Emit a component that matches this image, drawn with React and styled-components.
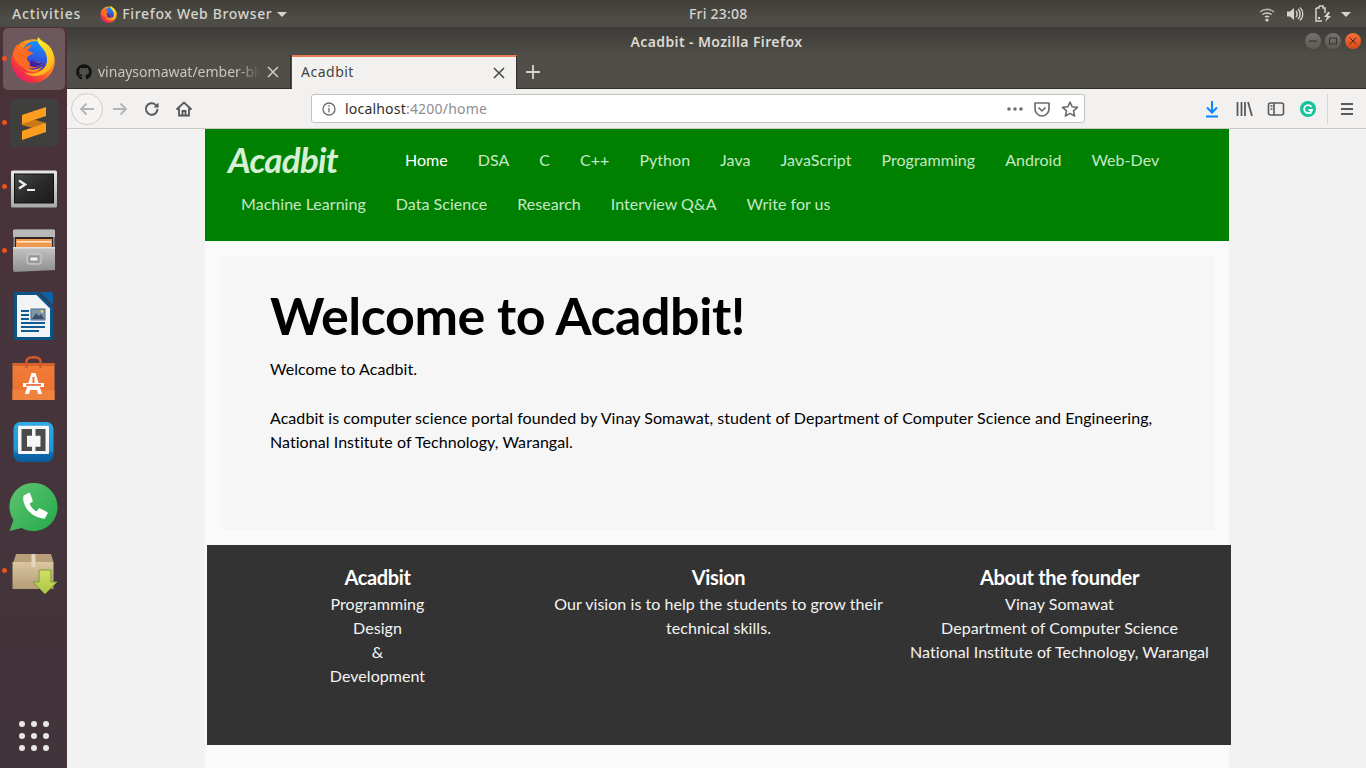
import React from "react";
import styled, { createGlobalStyle } from "styled-components";
import { FaGithub } from "react-icons/fa";

const Global = createGlobalStyle`
  html, body { margin: 0; padding: 0; height: 100%; overflow: hidden; background: #f2f2f2; }
  * { box-sizing: border-box; }
  #root { width: 1366px; height: 768px; }
`;

const UI_FONT = `"Noto Sans", "Open Sans", sans-serif`;
const PAGE_FONT = `Lato, "Open Sans", sans-serif`;

const Desktop = styled.div`
  width: 1366px; height: 768px; overflow: hidden;
  display: flex; flex-direction: column;
  background: #f2f2f2; font-family: ${UI_FONT};
`;
const TopBar = styled.header`
  height: 27px; flex: none; display: flex; align-items: center;
  background: linear-gradient(#3f3d38, #4f4d47 70%, #4d4b45);
  color: #d6d4ce; font-size: 14px; font-weight: 500; letter-spacing: .65px;
`;
const TopLeft = styled.div`
  width: 689px; padding-left: 12px; display: flex; align-items: center;
`;
const Activities = styled.span`letter-spacing: .9px;`;
const AppMenu = styled.div`
  margin-left: 19px; display: flex; align-items: center; gap: 4px;
`;
const Caret = styled.span`
  width: 0; height: 0; margin-left: ${p => p.$ml}px; margin-top: 1px;
  border-left: 5px solid transparent; border-right: 5px solid transparent;
  border-top: 5px solid #d6d4ce;
`;
const Clock = styled.div`letter-spacing: .2px;`;
const TopRight = styled.div`
  margin-left: auto; padding-right: 15px; display: flex; align-items: center; gap: 8px;
`;
const Main = styled.div`flex: 1; min-height: 0; display: flex;`;

const Dock = styled.nav`
  width: 67px; flex: none; display: flex; flex-direction: column;
  background: linear-gradient(#4b3138, #47343c 45%, #41343a);
`;
const DockSlot = styled.div`
  position: relative; height: 64px; flex: none;
  display: flex; align-items: center; justify-content: center;
  &::before {
    content: "";
    display: ${p => (p.$running ? "block" : "none")};
    position: absolute; left: 2px; top: 29px; width: 5px; height: 5px;
    border-radius: 50%; background: #e95420;
  }
`;
const ActiveTile = styled.div`
  width: 62px; height: 62px; border-radius: 5px; background: #6d585b;
  display: flex; align-items: center; justify-content: center;
`;
const Grid9 = styled.div`
  margin-top: auto; margin-bottom: 17px; align-self: center;
  display: grid; grid-template-columns: repeat(3, 6px); grid-auto-rows: 6px; gap: 6px;
`;
const Dot = styled.i`display: block; border-radius: 50%; background: #e9e7e6;`;

const Win = styled.div`flex: 1; min-width: 0; display: flex; flex-direction: column;`;
const TitleBar = styled.div`
  height: 28px; flex: none; display: grid; grid-template-columns: 1fr auto 1fr; align-items: center;
  background: linear-gradient(#3c3b37, #4f4d47);
  color: #dcdad3; font-size: 14px; font-weight: 600; letter-spacing: .38px;
`;
const WinTitle = styled.span`grid-column: 2;`;
const WinButtons = styled.div`
  grid-column: 3; justify-self: end; padding-right: 5px; display: flex; gap: 4px;
`;
const WinButton = styled.div`
  width: 16px; height: 16px; border-radius: 50%;
  background: ${p => (p.$close ? "linear-gradient(#f0703a,#d9481a)" : "linear-gradient(#74726c,#5c5a54)")};
  display: flex; align-items: center; justify-content: center;
`;
const TabStrip = styled.div`
  height: 34px; flex: none; display: flex; align-items: stretch;
  background: #504e48; border-bottom: 1px solid #2f2e2b;
`;
const Tab = styled.div`
  position: relative; display: flex; align-items: center;
  width: ${p => (p.$active ? 225 : 224)}px;
  padding-left: 9px;
  padding-bottom: ${p => (p.$active ? 4 : 0)}px;
  margin-right: ${p => (p.$active ? 0 : 1)}px;
  font-size: 14px; letter-spacing: ${p => (p.$active ? ".5px" : "0")};
  color: ${p => (p.$active ? "#45443f" : "#c9c7c1")};
  background: ${p => (p.$active ? "#f2f1f0" : "transparent")};
  border-top: ${p => (p.$active ? "2px solid #ea7b55" : "none")};
  border-right: 1px solid #2f2e2b;
  margin-bottom: ${p => (p.$active ? "-1px" : "0")};
`;
const TabText = styled.span`
  width: ${p => p.$w}px; margin-left: ${p => p.$ml || 0}px; white-space: nowrap; overflow: hidden;
  ${p => p.$fade && "mask-image: linear-gradient(90deg,#000 85%,transparent);"}
`;
const TabClose = styled.span`
  position: absolute; right: 11px; top: 50%; margin-top: -6px; width: 12px; height: 12px; display: flex;
`;
const NewTab = styled.div`width: 32px; display: flex; align-items: center; justify-content: center;`;

const Toolbar = styled.div`
  height: 40px; flex: none; display: flex; align-items: center;
  background: #f2f1f0; border-bottom: 1px solid #c9c8c6;
`;
const BackButton = styled.div`
  width: 32px; height: 32px; margin-left: 4px; border-radius: 50%;
  border: 1px solid #cfcecc; background: #f5f4f3;
  display: flex; align-items: center; justify-content: center;
`;
const ToolSlot = styled.div`
  width: 24px; height: 24px; flex: none; display: flex; align-items: center; justify-content: center;
  margin-left: ${p => p.$ml ?? 8}px;
`;
const UrlBar = styled.div`
  width: 774px; height: 29px; margin-left: 115px; flex: none; display: flex; align-items: center;
  background: #fff; border: 1px solid #c4c3c1; border-radius: 3px; padding: 0 5px 0 10px;
  font-size: 14px; letter-spacing: .2px; color: #8e8e8e;
`;
const UrlHost = styled.span`color: #2e2e2e;`;
const UrlText = styled.div`margin-left: 7px; flex: 1;`;
const UrlIcons = styled.div`display: flex; align-items: center; gap: 9px;`;
const Divider = styled.div`width: 1px; height: 30px; margin-left: 7px; background: #d6d5d3;`;

const Viewport = styled.div`flex: 1; min-height: 0; overflow: hidden; background: #f2f2f2;`;
const Container = styled.div`
  width: 1024px; height: 100%; margin-left: 138px; background: #fafafa; font-family: ${PAGE_FONT};
`;
const SiteNav = styled.div`
  height: 112px; background: #008000; padding: 9px 0 0 21px;
`;
const Brand = styled.a`
  float: left; width: 164px; height: 44px; padding-left: 2px;
  font-size: 35px; line-height: 42px; font-style: italic; font-weight: 700; color: #d5f0d5;
  letter-spacing: -.75px;
`;
const NavItem = styled.a`
  display: inline-block; padding: 0 15px; height: 44px; line-height: 44px;
  font-size: 16px; letter-spacing: .03px; color: ${p => (p.$active ? "#fff" : "#c6e8c6")};
`;
const Jumbo = styled.section`
  height: 274px; margin: 15px 14px 15px 15px; background: #f6f6f6; padding: 27px 50px 0;
  color: #000;
`;
const Title = styled.h1`
  margin: 0; font-size: 52px; line-height: 64px; font-weight: 700; letter-spacing: -.45px;
`;
const Para = styled.p`
  margin: 0; font-size: 16px; line-height: 24px; min-height: 24px; letter-spacing: .055px;
`;
const Spacer = styled.div`height: 25px;`;
const Intro = styled.div`margin-top: 10px;`;
const Footer = styled.footer`
  width: 1024px; height: 200px; margin-left: 2px; background: #333; color: #f4f4f4;
  display: grid; grid-template-columns: repeat(3, 1fr); padding: 20px 1px 0 0; text-align: center;
`;
const FootCol = styled.div`padding: 0 5px;`;
const FootHead = styled.h4`
  margin: 0 0 3px; font-size: 20px; line-height: 24px; font-weight: 700; color: #fff; letter-spacing: -.35px;
`;
const FootLine = styled.div`font-size: 16px; line-height: 24px; letter-spacing: .05px;`;

/* ---------- drawings ---------- */
const Firefox = ({ size = 48, id = "a" }) => (
  <svg width={size} height={size} viewBox="0 0 48 48">
    <defs>
      <linearGradient id={id + "o"} x1="1" y1="0" x2="0.15" y2="1">
        <stop offset="0" stopColor="#ffd52e" />
        <stop offset=".45" stopColor="#ff8a1c" />
        <stop offset=".8" stopColor="#f5313e" />
        <stop offset="1" stopColor="#e3168a" />
      </linearGradient>
      <linearGradient id={id + "b"} x1=".6" y1="0" x2=".4" y2="1">
        <stop offset="0" stopColor="#1296ff" />
        <stop offset=".6" stopColor="#2f57e0" />
        <stop offset="1" stopColor="#43209a" />
      </linearGradient>
      <linearGradient id={id + "y"} x1=".3" y1="0" x2=".7" y2="1">
        <stop offset="0" stopColor="#fff22e" />
        <stop offset="1" stopColor="#ffb01e" />
      </linearGradient>
    </defs>
    <circle cx="23" cy="26" r="21.8" fill={`url(#${id}o)`} />
    <circle cx="26" cy="21" r="15" fill={`url(#${id}b)`} />
    <path d="M28 2 C26 7 30 10 34 15 C38 21 38 29 34 33 C29 39 21 40 14 37 C21 43 33 42 39 35 C45 28 45 18 39 11 C36 8 31 6 28 2Z" fill={`url(#${id}y)`} />
    <path d="M7 9 C7 13 8 15 11 16 C14 12 18 10 22 10 C20 13 19 14 17 15 C20 17 22 17 24 19 C21 19 17 21 17 24 C18 28 22 29 25 28 C28 27 30 27 32 29 C28 33 21 35 15 33 C9 31 5 26 3 20 C3 16 5 12 7 9Z" fill="#ff6a22" />
    <path d="M22 25 C24 28 29 28 32 28 C30 32 24 33 20 31 C19 29 20 27 22 25Z" fill="#4320a0" />
    <path d="M13 31 C18 36 26 36 33 31 C29 38 18 39 13 31Z" fill="#ff9a1f" />
  </svg>
);

const Sublime = () => (
  <svg width="48" height="48" viewBox="0 0 48 48">
    <rect width="48" height="48" rx="4" fill="#3f3f3e" />
    <path d="M12 17 L36 24 L36 33 L12 26Z" fill="#c9781a" />
    <path d="M12 16 L36 8 L36 17 L12 25Z" fill="#ff9e1e" />
    <path d="M12 32 L36 24 L36 33 L12 41Z" fill="#ff9e1e" />
  </svg>
);

const Terminal = () => (
  <svg width="48" height="56" viewBox="0 0 48 56">
    <defs>
      <linearGradient id="tf" x1="0" y1="0" x2="0" y2="1">
        <stop offset="0" stopColor="#e8e8e8" /><stop offset="1" stopColor="#a9a9a9" />
      </linearGradient>
      <linearGradient id="ts" x1="0" y1="0" x2="1" y2="1">
        <stop offset="0" stopColor="#45484a" /><stop offset=".5" stopColor="#2a2a2a" /><stop offset="1" stopColor="#1c1c1c" />
      </linearGradient>
    </defs>
    <rect x="1" y="11.5" width="46" height="37" rx="1.5" fill="url(#tf)" />
    <rect x="4" y="14.5" width="40" height="30" fill="#111" />
    <rect x="5" y="15.5" width="38" height="28" fill="url(#ts)" />
    <path d="M9 21.5 L15 25.5 L9 29.5" fill="none" stroke="#eee" strokeWidth="2.4" />
    <rect x="17" y="30" width="8" height="2" fill="#eee" />
  </svg>
);

const Files = () => (
  <svg width="48" height="56" viewBox="0 0 48 56">
    <defs>
      <linearGradient id="fb" x1="0" y1="0" x2="0" y2="1">
        <stop offset="0" stopColor="#c4c4c4" /><stop offset="1" stopColor="#8f8f8f" />
      </linearGradient>
    </defs>
    <path d="M3.500 7 C3.500 6 4.500 6 5.500 6 L43.500 6 C44.500 6 44.500 7 44.500 8 L44.500 47 L3.500 47Z" fill="#8b8b8b" />
    <rect x="3" y="7" width="42" height="7" fill="#b9b9b9" />
    <rect x="5" y="14" width="38" height="10" fill="#2b2622" />
    <rect x="6" y="16" width="36" height="9" fill="#ef9a4f" />
    <rect x="7" y="18" width="34" height="1.5" fill="#fbe7c9" />
    <path d="M3 24 L45 24 L45 47 L4 49 L3 47Z" fill="url(#fb)" />
    <rect x="3" y="24" width="42" height="1.5" fill="#e2e2e2" />
    <rect x="17" y="31" width="14" height="10" rx="2" fill="#a4a4a4" stroke="#d4d4d4" />
    <rect x="20" y="34" width="8" height="4" fill="#f0f0f0" stroke="#555" strokeWidth=".5" />
  </svg>
);

const Writer = () => (
  <svg width="48" height="56" viewBox="0 0 48 56">
    <path d="M4 5 L28 5 L43 20 L43 51 C43 52 42 53 41 53 L6 53 C5 53 4 52 4 51Z" fill="#0b5487" />
    <path d="M7 8 L26.500 8 L40 21.500 L40 50 L7 50Z" fill="#f1f3f4" />
    <path d="M30 5 L41 5 C42 5 43 6 43 7 L43 18Z" fill="#0d62a6" />
    <rect x="11" y="23" width="8" height="2" fill="#0f5b93" />
    <rect x="11" y="27" width="8" height="2" fill="#0f5b93" />
    <rect x="11" y="31" width="8" height="2" fill="#0f5b93" />
    <rect x="11" y="35" width="24" height="2" fill="#0f5b93" />
    <rect x="11" y="39" width="24" height="2" fill="#0f5b93" />
    <rect x="11" y="43" width="18" height="2" fill="#0f5b93" />
    <rect x="21" y="22" width="14" height="11" fill="#7f97ad" stroke="#4f708f" />
    <path d="M22 32 L26 26 L29 29 L31 27 L34 32Z" fill="#3c5168" />
    <circle cx="32" cy="24.500" r="1.400" fill="#f1d254" />
  </svg>
);

const Software = () => (
  <svg width="48" height="56" viewBox="0 0 48 56">
    <defs>
      <linearGradient id="sb" x1="0" y1="0" x2="0" y2="1">
        <stop offset="0" stopColor="#f17c3a" /><stop offset="1" stopColor="#ee6f2d" />
      </linearGradient>
    </defs>
    <path d="M2.500 12 L44.500 12 L44.500 49 L2.500 49Z" fill="url(#sb)" />
    <path d="M2.500 12 L44.500 12 L43.500 15 L3.500 15Z" fill="#d6622a" />
    <rect x="2.500" y="39" width="42" height="10" fill="#f0823f" />
    <path d="M16.500 17 L16.500 10 C16.500 5 30.500 5 30.500 10 L30.500 17" fill="none" stroke="#d4582a" strokeWidth="2.400" />
    <path d="M21.500 22 L25.500 22 L32 43 L28 43 L27 39 L20 39 L19 43 L15 43Z" fill="#fff" />
    <rect x="22.500" y="26" width="2" height="6" fill="#ee7331" />
    <rect x="13" y="32" width="21" height="4" fill="#fff" />
    <rect x="16" y="33.200" width="15" height="1.500" fill="#e35a22" />
  </svg>
);

const Brackets = () => (
  <svg width="48" height="56" viewBox="0 0 48 56">
    <defs>
      <linearGradient id="bk" x1="0" y1="0" x2="0" y2="1">
        <stop offset="0" stopColor="#2fa9e8" /><stop offset=".72" stopColor="#1c93d8" /><stop offset=".8" stopColor="#0e69ad" /><stop offset="1" stopColor="#0c5c9b" />
      </linearGradient>
    </defs>
    <rect x="3.500" y="7" width="40" height="40" rx="7" fill="url(#bk)" />
    <rect x="8" y="10.700" width="31" height="28.300" rx="1" fill="#f4f6f7" />
    <path d="M11.500 14 L22 14 L22 20.700 L17 20.700 L17 31.700 L22 31.700 L22 36 L11.500 36Z" fill="#4b4b4b" />
    <path d="M25.500 14 L35.500 14 L35.500 36 L25.500 36 L25.500 31.700 L30.500 31.700 L30.500 20.700 L25.500 20.700Z" fill="#4b4b4b" />
  </svg>
);

const WhatsApp = () => (
  <svg width="50" height="50" viewBox="0 0 50 50">
    <defs>
      <linearGradient id="wa" x1="0" y1="0" x2="1" y2="1">
        <stop offset="0" stopColor="#5ec46e" /><stop offset="1" stopColor="#25a94c" />
      </linearGradient>
    </defs>
    <path d="M24.500 1 C38 1 48.500 11.500 48.500 25 C48.500 38.500 38 49 24.500 49 C20 49 16 48 12.500 46 L0.500 49 L4.500 38 C2 34 0.500 30 0.500 25 C0.500 11.500 11 1 24.500 1Z" fill="url(#wa)" />
    <path d="M16.500 16 C17.500 25 23.500 32 33.500 34" fill="none" stroke="#fff" strokeWidth="5" />
    <path d="M15.500 14.500 L20 12 L22.500 19 L17.500 22Z" fill="#fff" stroke="#fff" strokeWidth="2.500" strokeLinejoin="round" />
    <path d="M27.500 32 L30.500 27.500 L37.500 31 L35 35.500Z" fill="#fff" stroke="#fff" strokeWidth="2.500" strokeLinejoin="round" />
  </svg>
);

const Archive = () => (
  <svg width="48" height="56" viewBox="0 0 48 56">
    <defs>
      <linearGradient id="ar" x1="0" y1="0" x2="0" y2="1">
        <stop offset="0" stopColor="#d9c5a0" /><stop offset="1" stopColor="#b59d75" />
      </linearGradient>
      <linearGradient id="ag" x1="0" y1="0" x2="0" y2="1">
        <stop offset="0" stopColor="#d2e06b" /><stop offset="1" stopColor="#a9c63f" />
      </linearGradient>
    </defs>
    <path d="M3.500 19 L6 11 L41 11 L43.500 19Z" fill="#b89f78" />
    <rect x="2.500" y="19" width="41" height="27" fill="url(#ar)" />
    <rect x="21.500" y="11" width="4" height="13" fill="#e2d5bd" />
    <path d="M29 27 L41 27 L41 39 L47 39 L35 51 L23 39 L29 39Z" fill="url(#ag)" stroke="#7d9a37" strokeWidth="1" />
  </svg>
);

const Wifi = () => (
  <svg width="20" height="16" viewBox="0 0 20 16" fill="none" stroke="#d6d4ce">
    <path d="M3 6 C7 2.500 13 2.500 17 6" strokeWidth="1.600" opacity=".75" />
    <path d="M5.500 8.500 C8 6.500 12 6.500 14.500 8.500" strokeWidth="1.600" />
    <path d="M8 11 C9 10.200 11 10.200 12 11" strokeWidth="1.600" />
    <circle cx="10" cy="14" r="1.600" fill="#d6d4ce" stroke="none" />
  </svg>
);
const Volume = () => (
  <svg width="20" height="16" viewBox="0 0 20 16" fill="none" stroke="#d6d4ce">
    <path d="M2 5.500 L5 5.500 L9 2 L9 14 L5 10.500 L2 10.500Z" fill="#d6d4ce" stroke="none" />
    <path d="M11 5 C12.500 6.500 12.500 9.500 11 11" strokeWidth="1.500" />
    <path d="M13 3 C15.800 5.500 15.800 10.500 13 13" strokeWidth="1.500" />
    <path d="M15 1.500 C18.800 5 18.800 11 15 14.500" strokeWidth="1.300" />
  </svg>
);
const Battery = () => (
  <svg width="20" height="18" viewBox="0 0 20 18" fill="none" stroke="#d6d4ce" strokeWidth="1.500">
    <path d="M6 1 L10 1 L10 3 L12 3 L12 8 M3 3 L6 3 L6 1 M3 3 L3 16 L9 16" />
    <rect x="5" y="12" width="2" height="2" fill="#d6d4ce" stroke="none" />
    <path d="M15 7 L11 12 L14 12 L12 17 L18 11 L15 11 L17 7Z" fill="#d6d4ce" stroke="none" />
  </svg>
);
const SmallX = ({ color = "#4a4a47", size = 12, width = 1.6 }) => (
  <svg width={size} height={size} viewBox="0 0 12 12" stroke={color} strokeWidth={width} fill="none">
    <path d="M1 1 L11 11 M11 1 L1 11" />
  </svg>
);
const Stroke = ({ w = 18, h = 18, color = "#5a5a5a", sw = 1.6, children }) => (
  <svg width={w} height={h} viewBox={`0 0 ${w} ${h}`} fill="none" stroke={color} strokeWidth={sw}>{children}</svg>
);

const NAV = ["DSA", "C", "C++", "Python", "Java", "JavaScript", "Programming", "Android", "Web-Dev",
  "Machine Learning", "Data Science", "Research", "Interview Q&A", "Write for us"];

const dock = [
  [Sublime, true], [Terminal, true], [Files, true], [Writer, false],
  [Software, false], [Brackets, false], [WhatsApp, false], [Archive, true],
];

export default function App() {
  return (
    <Desktop>
      <Global />
      <TopBar>
        <TopLeft>
          <Activities>Activities</Activities>
          <AppMenu>
            <Firefox size={18} id="t" />
            <span>Firefox Web Browser</span>
            <Caret $ml={1} />
          </AppMenu>
        </TopLeft>
        <Clock>Fri 23:08</Clock>
        <TopRight>
          <Wifi /><Volume /><Battery /><Caret $ml={0} />
        </TopRight>
      </TopBar>
      <Main>
        <Dock>
          <DockSlot $running>
            <ActiveTile><Firefox size={48} id="d" /></ActiveTile>
          </DockSlot>
          {dock.map(([Icon, running], i) => (
            <DockSlot key={i} $running={running}><Icon /></DockSlot>
          ))}
          <Grid9>{Array.from({ length: 9 }, (_, i) => <Dot key={i} />)}</Grid9>
        </Dock>
        <Win>
          <TitleBar>
            <WinTitle>Acadbit - Mozilla Firefox</WinTitle>
            <WinButtons>
              <WinButton>
                <svg width="10" height="10" viewBox="0 0 10 10"><rect x="1" y="4.500" width="8" height="1.200" fill="#35342f" /></svg>
              </WinButton>
              <WinButton>
                <svg width="10" height="10" viewBox="0 0 10 10"><rect x="1.500" y="2" width="7" height="6" fill="none" stroke="#35342f" /></svg>
              </WinButton>
              <WinButton $close><SmallX color="#4a2010" size={8} width={1.4} /></WinButton>
            </WinButtons>
          </TitleBar>
          <TabStrip>
            <Tab>
              <FaGithub size={16} color="#111" />
              <TabText $w={163} $ml={6} $fade>vinaysomawat/ember-blog</TabText>
              <TabClose><SmallX color="#c9c7c1" /></TabClose>
            </Tab>
            <Tab $active>
              <TabText $w={160}>Acadbit</TabText>
              <TabClose><SmallX /></TabClose>
            </Tab>
            <NewTab>
              <svg width="14" height="14" viewBox="0 0 14 14" stroke="#d6d4ce" strokeWidth="1.800"><path d="M7 0 V14 M0 7 H14" /></svg>
            </NewTab>
          </TabStrip>
          <Toolbar>
            <BackButton>
              <Stroke color="#b4b4b4" sw={1.8}><path d="M16 9 H3 M8.500 3.500 L3 9 L8.500 14.500" /></Stroke>
            </BackButton>
            <ToolSlot $ml={5}>
              <Stroke color="#b4b4b4" sw={1.8}><path d="M2 9 H15 M9.500 3.500 L15 9 L9.500 14.500" /></Stroke>
            </ToolSlot>
            <ToolSlot>
              <Stroke sw={2}><path d="M14.500 9 A5.800 5.800 0 1 1 12.800 4.900 L15 7" /><path d="M15.500 2.500 V7.500 H10.500" fill="#5a5a5a" stroke="none" /></Stroke>
            </ToolSlot>
            <ToolSlot>
              <Stroke sw={1.8}><path d="M1.500 9.500 L9 2.500 L16.500 9.500 M4 8 V15.500 H14 V8 M7.500 15.500 V11 H10.500 V15.500" /></Stroke>
            </ToolSlot>
            <UrlBar>
              <Stroke w={16} h={16} color="#6d6d6d" sw={1.3}><circle cx="7" cy="8" r="6" /><path d="M7 7 V11.500 M7 4.200 V5.800" /></Stroke>
              <UrlText><UrlHost>localhost</UrlHost>:4200/home</UrlText>
              <UrlIcons>
                <svg width="16" height="4" viewBox="0 0 16 4" fill="#6d6d6d"><circle cx="2" cy="2" r="1.800" /><circle cx="8" cy="2" r="1.800" /><circle cx="14" cy="2" r="1.800" /></svg>
                <Stroke w={20} h={18} color="#6d6d6d" sw={1.7}><path d="M3 3 H17 V9 C17 13 13.500 16 10 16 C6.500 16 3 13 3 9Z M6.500 7.500 L10 11 L13.500 7.500" strokeLinejoin="round" /></Stroke>
                <Stroke color="#6d6d6d" sw={1.6}><path d="M9 2 L11.200 6.800 L16.500 7.400 L12.500 10.900 L13.600 16 L9 13.400 L4.400 16 L5.500 10.900 L1.500 7.400 L6.800 6.800Z" strokeLinejoin="round" /></Stroke>
              </UrlIcons>
            </UrlBar>
            <ToolSlot $ml={115}>
              <Stroke color="#0a84ff" sw={2}><path d="M9 1 V12 M4 7.500 L9 12.500 L14 7.500 M3 16.500 H15" /></Stroke>
            </ToolSlot>
            <ToolSlot>
              <Stroke sw={1.8}><path d="M2.500 2 V16 M6.500 2 V16 M10 2 V16 M13 2 L17 16" /></Stroke>
            </ToolSlot>
            <ToolSlot>
              <Stroke sw={1.6}><rect x="1.500" y="3" width="15" height="12" rx="2" /><path d="M7 3 V15 M3.500 6 H5.500 M3.500 9 H5.500" /></Stroke>
            </ToolSlot>
            <ToolSlot>
              <svg width="16" height="16" viewBox="0 0 16 16">
                <circle cx="8" cy="8" r="8" fill="#15c39a" />
                <path d="M11.500 6 A4 4 0 1 0 12 9 L8.500 9 M10 11 L11.500 12.500" fill="none" stroke="#fff" strokeWidth="1.800" />
              </svg>
            </ToolSlot>
            <Divider />
            <ToolSlot $ml={7}>
              <Stroke w={14} h={14} sw={1.8}><path d="M1 2 H13 M1 7 H13 M1 12 H13" /></Stroke>
            </ToolSlot>
          </Toolbar>
          <Viewport>
            <Container>
              <SiteNav>
                <Brand>Acadbit</Brand>
                <NavItem $active>Home</NavItem>
                {NAV.map(n => <NavItem key={n}>{n}</NavItem>)}
              </SiteNav>
              <Jumbo>
                <Title>Welcome to Acadbit!</Title>
                <Intro>
                  <Para>Welcome to Acadbit.</Para>
                  <Spacer />
                  <Para>Acadbit is computer science portal founded by Vinay Somawat, student of Department of Computer Science and Engineering, National Institute of Technology, Warangal.</Para>
                </Intro>
              </Jumbo>
              <Footer>
                <FootCol>
                  <FootHead>Acadbit</FootHead>
                  <FootLine>Programming</FootLine>
                  <FootLine>Design</FootLine>
                  <FootLine>&amp;</FootLine>
                  <FootLine>Development</FootLine>
                </FootCol>
                <FootCol>
                  <FootHead>Vision</FootHead>
                  <FootLine>Our vision is to help the students to grow their technical skills.</FootLine>
                </FootCol>
                <FootCol>
                  <FootHead>About the founder</FootHead>
                  <FootLine>Vinay Somawat</FootLine>
                  <FootLine>Department of Computer Science</FootLine>
                  <FootLine>National Institute of Technology, Warangal</FootLine>
                </FootCol>
              </Footer>
            </Container>
          </Viewport>
        </Win>
      </Main>
    </Desktop>
  );
}
